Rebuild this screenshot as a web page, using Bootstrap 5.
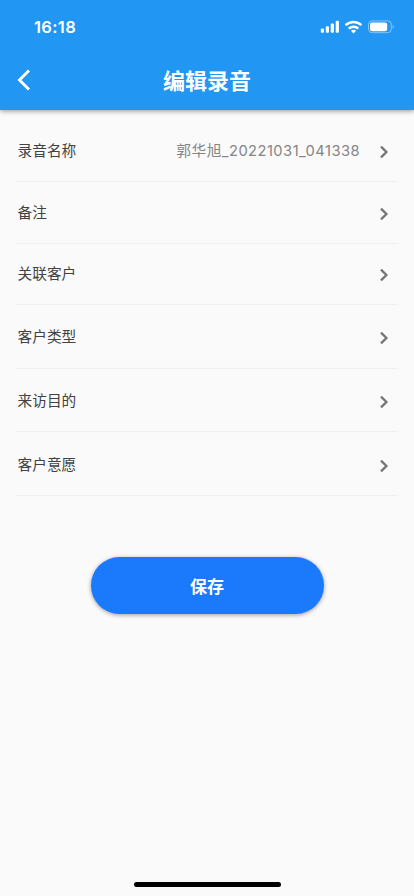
<!DOCTYPE html>
<html lang="zh-CN">
<head>
<meta charset="utf-8">
<meta name="viewport" content="width=device-width, initial-scale=1">
<title>编辑录音</title>
<link href="https://cdn.jsdelivr.net/npm/bootstrap@5.3.0/dist/css/bootstrap.min.css" rel="stylesheet">
<style>
body{background:#fafafa;font-family:Inter,"Noto Sans CJK SC",sans-serif;height:896px;overflow:hidden}
.app-header{background:#2196f3;height:109.6px;box-shadow:0 1px 5px rgba(0,0,0,.42);flex:none;z-index:1}
.status-bar{height:53px;padding:0 19px 0 34px}
.clock{font-size:16.5px;font-weight:600;line-height:20px;letter-spacing:.35px}
.title-bar{display:grid;grid-template-columns:48px 1fr 48px;height:54px}
.page-title{font-size:22px;font-weight:700;line-height:32px;padding-top:1px}
.back{padding:0 0 0 16.5px;line-height:0}
.form-rows{padding:11.4px 17px 0 15px}
.form-row{height:61.4px;border-bottom:1px solid #efefef;padding:1px 8.5px 0 2.5px;font-size:14.7px;line-height:22px;color:#424242}
.form-row.tall{height:63.6px;padding-top:2px}
.form-row:last-child{padding-top:3px}
.form-row:first-child{padding:0 8.5px 1px 2.5px}
.form-row svg{margin-left:20px;margin-top:2px}
.row-value{color:#858585;letter-spacing:.46px;margin-right:-.5px}
.save{width:233px;height:57px;margin-top:61.5px;padding-top:9px;background:#1b7afc;color:#fff;font-size:17px;font-weight:700;box-shadow:0 1px 4px rgba(0,0,0,.38)}
.home-bar{width:147px;height:5px;background:#000;margin-bottom:9px}
</style>
</head>
<body class="d-flex flex-column">
<header class="app-header text-white">
  <div class="status-bar d-flex align-items-center justify-content-between">
    <span class="clock">16:18</span>
    <svg width="75" height="14" viewBox="0 0 75 14" fill="#fff" aria-hidden="true">
      <rect x="0.8" y="8.5" width="3.2" height="4.2" rx="1"/><rect x="5.8" y="6.2" width="3.2" height="6.5" rx="1"/><rect x="10.7" y="3.5" width="3.2" height="9.2" rx="1"/><rect x="15.7" y="0.7" width="3.2" height="12" rx="1"/>
      <g fill="none" stroke="#fff" stroke-width="2.4"><path d="M25.6 5.2a11.4 11.4 0 0 1 15.8 0"/><path d="M28.7 8.6a7 7 0 0 1 9.6 0"/></g>
      <path d="M30.9 10.8a3.9 3.9 0 0 1 5.2 0L33.5 13.4z"/>
      <rect x="48.5" y="0.9" width="22.8" height="11.8" rx="3.6" fill="none" stroke="#fff" stroke-opacity=".45"/>
      <rect x="50" y="2.4" width="17.2" height="8.8" rx="2.2"/>
      <path d="M72.6 4.9c1.7.7 1.7 3 0 3.7z" fill-opacity=".5"/>
    </svg>
  </div>
  <div class="title-bar align-items-center">
    <button class="back btn border-0 text-start" aria-label="返回"><svg width="14" height="22" viewBox="0 0 14 22" fill="none" stroke="#fff" stroke-width="2.9"><path d="M12 1.4 2.5 11 12 20.6"/></svg></button>
    <h1 class="page-title text-center m-0">编辑录音</h1>
  </div>
</header>
<main class="flex-grow-1 d-flex flex-column">
  <div class="form-rows">
    <div class="form-row d-flex align-items-center"><span>录音名称</span><span class="row-value ms-auto">郭华旭_20221031_041338</span><svg width="9" height="14" viewBox="0 0 9 14" fill="none" stroke="#757575" stroke-width="2.3"><path d="m1 1.6 5.4 5.4L1 12.4"/></svg></div>
    <div class="form-row d-flex align-items-center justify-content-between"><span>备注</span><svg width="9" height="14" viewBox="0 0 9 14" fill="none" stroke="#757575" stroke-width="2.3"><path d="m1 1.6 5.4 5.4L1 12.4"/></svg></div>
    <div class="form-row d-flex align-items-center justify-content-between"><span>关联客户</span><svg width="9" height="14" viewBox="0 0 9 14" fill="none" stroke="#757575" stroke-width="2.3"><path d="m1 1.6 5.4 5.4L1 12.4"/></svg></div>
    <div class="form-row tall d-flex align-items-center justify-content-between"><span>客户类型</span><svg width="9" height="14" viewBox="0 0 9 14" fill="none" stroke="#757575" stroke-width="2.3"><path d="m1 1.6 5.4 5.4L1 12.4"/></svg></div>
    <div class="form-row tall d-flex align-items-center justify-content-between"><span>来访目的</span><svg width="9" height="14" viewBox="0 0 9 14" fill="none" stroke="#757575" stroke-width="2.3"><path d="m1 1.6 5.4 5.4L1 12.4"/></svg></div>
    <div class="form-row tall d-flex align-items-center justify-content-between"><span>客户意愿</span><svg width="9" height="14" viewBox="0 0 9 14" fill="none" stroke="#757575" stroke-width="2.3"><path d="m1 1.6 5.4 5.4L1 12.4"/></svg></div>
  </div>
  <button class="save btn rounded-pill border-0 mx-auto">保存</button>
  <div class="home-bar rounded-pill mt-auto mx-auto"></div>
</main>
<script src="https://cdn.jsdelivr.net/npm/bootstrap@5.3.0/dist/js/bootstrap.bundle.min.js"></script>
</body>
</html>
